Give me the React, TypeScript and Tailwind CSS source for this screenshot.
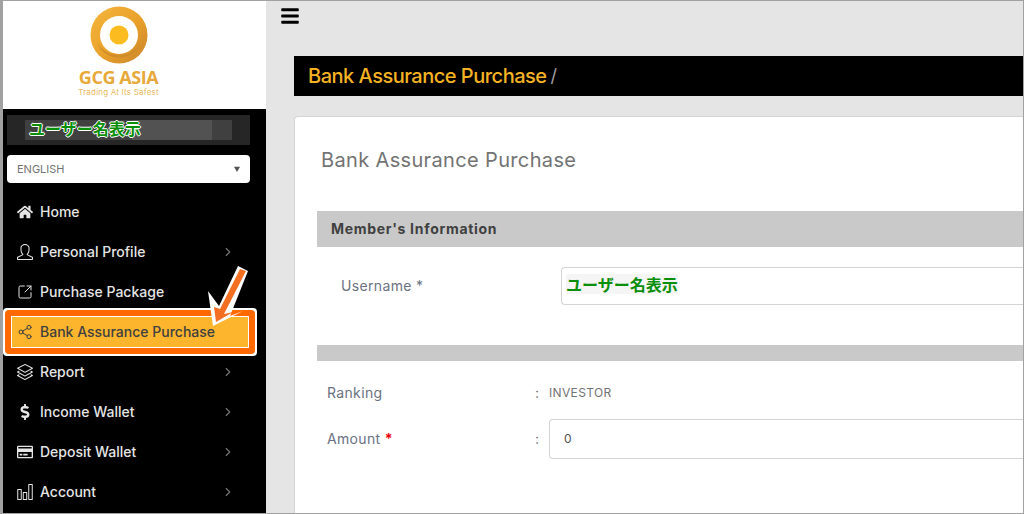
import { ChevronRight, Share2, SquareArrowOutUpRight } from "lucide-react";
import { FaBars, FaDollarSign, FaHome, FaRegCreditCard } from "react-icons/fa";
import { SlChart, SlLayers, SlUser } from "react-icons/sl";

const menu = [
  { label: "Home", icon: <FaHome className="size-4" /> },
  { label: "Personal Profile", icon: <SlUser className="size-4" />, more: true },
  { label: "Purchase Package", icon: <SquareArrowOutUpRight className="size-4" strokeWidth={1.5} /> },
  { label: "Bank Assurance Purchase", icon: <Share2 className="size-4" strokeWidth={1.5} />, active: true },
  { label: "Report", icon: <SlLayers className="size-4" />, more: true },
  { label: "Income Wallet", icon: <FaDollarSign className="size-4" />, more: true },
  { label: "Deposit Wallet", icon: <FaRegCreditCard className="size-4" />, more: true },
  { label: "Account", icon: <SlChart className="size-4" />, more: true },
];

const mosaic = ["bg-neutral-700", "bg-neutral-600", "bg-neutral-600", "bg-neutral-600", "bg-neutral-600", "bg-neutral-700"];

function Logo() {
  return (
    <div className="flex h-27 flex-col items-center justify-start bg-white pt-1 pr-8">
      <svg viewBox="0 0 60 60" className="size-15">
        <defs>
          <linearGradient id="ring" x1="0" y1="0" x2="1" y2="1">
            <stop offset="0" stopColor="#f5b73c" />
            <stop offset="0.55" stopColor="#e8a02a" />
            <stop offset="1" stopColor="#c9842c" />
          </linearGradient>
        </defs>
        <circle cx="30" cy="30" r="28.5" fill="url(#ring)" />
        <path d="M8 38 A24 24 0 0 0 52 38 A26 26 0 0 1 8 38Z" fill="#d08c2a" />
        <circle cx="30" cy="30" r="19" fill="white" />
        <circle cx="30" cy="30" r="9.5" fill="#fcbb1f" />
      </svg>
      <div className="mt-0.5 font-['Open_Sans',sans-serif] text-lg leading-5 font-bold tracking-tight text-[#e6a93a]">GCG ASIA</div>
      <div className="text-[8px] leading-2.5 tracking-wide text-[#e9b95c]">Trading At Its Safest</div>
    </div>
  );
}

function Arrow() {
  return (
    <svg viewBox="0 0 48 72" className="absolute -top-12.5 left-50 z-20 h-18 w-12">
      <polygon points="35,4 45,9 27,54 40,49 10,64 5,29 16,44" fill="white" />
      <polygon points="37,7 43,9 21,52 30,50 13,60 11,45 17,47" fill="#f36f21" />
    </svg>
  );
}

function MenuItem({ label, icon, more, active }: { label: string; icon: React.ReactNode; more?: boolean; active?: boolean }) {
  return (
    <div className={`relative flex h-10 items-center pl-3.5 ${active ? "text-neutral-700" : "text-neutral-200"}`}>
      {active && (
        <div className="absolute -inset-y-1 left-0 w-63.5 rounded bg-white p-0.5">
          <div className="h-full rounded-sm bg-orange-500 p-1.5">
            <div className="h-full bg-white p-px">
              <div className="h-full bg-[#fdb52e]" />
            </div>
          </div>
        </div>
      )}
      <span className="relative flex w-5.75 shrink-0 items-center justify-start">{icon}</span>
      <span className="relative text-sm font-medium">{label}</span>
      {more && <ChevronRight className="absolute left-54.5 size-3.5 text-neutral-500" />}
      {active && <Arrow />}
    </div>
  );
}

const jp = "font-['Noto_Sans_CJK_JP',sans-serif]";

function Sidebar() {
  return (
    <aside className="flex w-[263px] shrink-0 flex-col bg-black">
      <Logo />
      <div className="pt-1.5 pr-4 pl-1">
        <div className="flex h-7.5 items-center bg-neutral-800 px-4.5">
          <div className="relative flex h-5 w-52 items-center bg-neutral-700 pl-1">
            <div className="absolute inset-y-0 right-0 flex">
              {mosaic.map((c, i) => (
                <div key={i} className={`h-full w-5 ${c}`} />
              ))}
            </div>
            <span
              className={`relative mb-1 text-base leading-5 font-bold text-[#0a8f0a] [text-shadow:1px_0_0_white,-1px_0_0_white,0_1px_0_white,0_-1px_0_white] ${jp}`}
            >
              ユーザー名表示
            </span>
          </div>
        </div>
        <div className="mt-2.5 flex h-7 items-center justify-between rounded-sm bg-white pr-2.5 pl-2.5 text-[11px] text-neutral-500">
          <span>ENGLISH</span>
          <svg viewBox="0 0 8 8" className="size-1.5 text-neutral-600">
            <polygon points="0,1 8,1 4,8" fill="currentColor" />
          </svg>
        </div>
      </div>
      <nav className="mt-2.25 flex flex-col">
        {menu.map((m) => (
          <MenuItem key={m.label} {...m} />
        ))}
      </nav>
    </aside>
  );
}

function Main() {
  return (
    <main className="-mt-px flex min-w-0 flex-1 flex-col bg-neutral-200">
      <div className="flex h-14 shrink-0 items-start pt-1.5 pl-3.5">
        <FaBars className="size-5 text-black" />
      </div>
      <div className="ml-7 flex h-10 shrink-0 items-center bg-black pl-3.5">
        <span className="text-xl font-medium tracking-tight text-[#f5b324]">Bank Assurance Purchase</span>
        <span className="ml-1 text-lg text-neutral-400">/</span>
      </div>
      <section className="mt-5 ml-7 flex min-h-0 flex-1 flex-col rounded-tl border-t border-l border-neutral-300 bg-white pt-7 pl-5.5 text-sm tracking-wide text-neutral-500">
        <h1 className="mb-9.5 h-7 pl-1 text-xl leading-7.5 text-neutral-500">Bank Assurance Purchase</h1>
        <div className="flex h-9 shrink-0 items-center bg-[#c9c9c9] pl-3.5 font-bold tracking-wider text-neutral-700">Member's Information</div>
        <div className="mt-5 flex h-9.5 items-center pl-6">
          <label className="w-55 shrink-0 text-gray-500">Username *</label>
          <div className="flex h-full flex-1 items-center rounded-l border-y border-l border-neutral-300 pl-1">
            <span className={`mb-1 bg-neutral-100 text-base leading-5 font-bold tracking-normal text-[#0a8f0a] ${jp}`}>ユーザー名表示</span>
          </div>
        </div>
        <div className="mt-10 h-4 shrink-0 bg-[#c9c9c9]" />
        <div className="mt-5 flex h-6 items-center pl-2.5">
          <span className="w-52 shrink-0 text-gray-500">Ranking</span>
          <span className="w-3.5 shrink-0">:</span>
          <span className="text-xs">INVESTOR</span>
        </div>
        <div className="mt-3.5 flex h-10 items-center pl-2.5">
          <span className="w-52 shrink-0 text-gray-500">
            Amount <span className="font-bold text-red-600">*</span>
          </span>
          <span className="w-3.5 shrink-0">:</span>
          <div className="flex h-full flex-1 items-center rounded-l border-y border-l border-neutral-300 pl-3.5 text-xs text-neutral-600">0</div>
        </div>
      </section>
    </main>
  );
}

export default function App() {
  return (
    <div className="flex h-screen w-screen overflow-hidden border-t border-r border-b border-l-[3px] border-neutral-400 bg-white font-['Inter',sans-serif]">
      <Sidebar />
      <Main />
    </div>
  );
}
